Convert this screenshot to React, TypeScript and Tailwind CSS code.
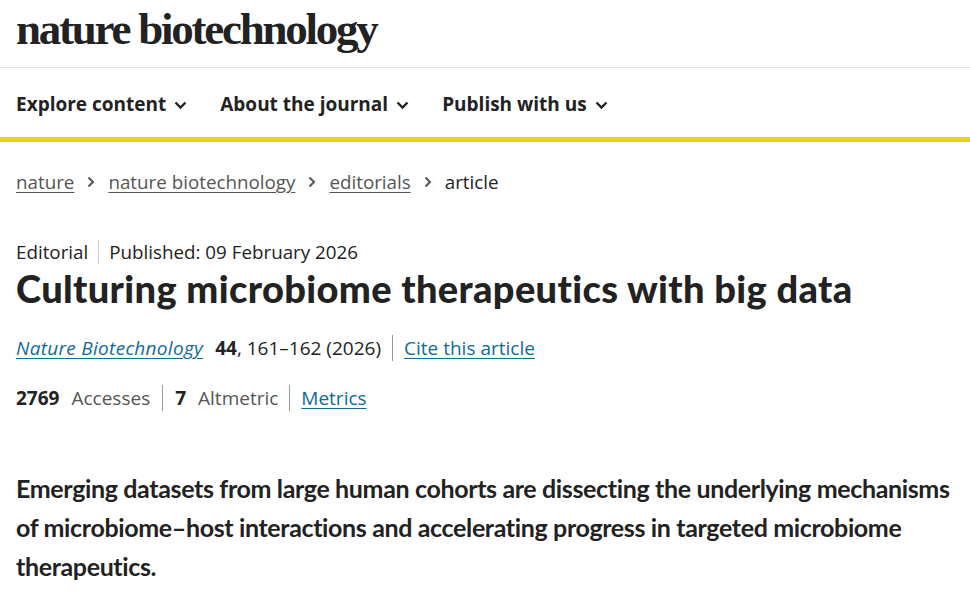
import React from "react";

const Chevron = () => (
  <svg width="13" height="9" viewBox="0 0 13 9" className="ml-[8px] mt-[1px]" fill="none">
    <path d="M1.5 1.5 L6.5 6.5 L11.5 1.5" stroke="#222" strokeWidth="2.4" />
  </svg>
);

const Crumb = () => (
  <svg width="8" height="12" viewBox="0 0 8 12" className="mx-[13px]" fill="none">
    <path d="M1.5 1.5 L6 6 L1.5 10.5" stroke="#555" strokeWidth="2" />
  </svg>
);

const sans = { fontFamily: "'Open Sans', 'Noto Sans', sans-serif" };
const head = { fontFamily: "Lato, 'Open Sans', sans-serif" };

export default function App() {
  return (
    <div className="w-[970px] h-[604px] bg-white overflow-hidden text-[#222]" style={sans}>
      <header className="h-[68px] border-b border-[#e6e6e6] px-[16px] flex items-start">
        <div
          className="mt-[3px] text-[45px] font-bold tracking-[-2.25px] text-[#222] leading-[52px]"
          style={{ fontFamily: "'Liberation Serif', 'DejaVu Serif', serif" }}
        >
          nature biotechnology
        </div>
      </header>
      <nav className="h-[69px] pt-[4px] px-[16px] flex items-center gap-[33px] text-[19px] font-bold text-[#222]">
        <div className="flex items-center">Explore content<Chevron /></div>
        <div className="flex items-center">About the journal<Chevron /></div>
        <div className="flex items-center">Publish with us<Chevron /></div>
      </nav>
      <div className="h-[5px] bg-[#e8d314]" />
      <main className="px-[16px]">
        <div className="mt-[27px] flex items-center text-[18.8px] leading-[26px]">
          <a className="text-[#555] underline underline-offset-[3px] decoration-1">nature</a>
          <Crumb />
          <a className="text-[#555] underline underline-offset-[3px] decoration-1">nature biotechnology</a>
          <Crumb />
          <a className="text-[#555] underline underline-offset-[3px] decoration-1">editorials</a>
          <Crumb />
          <span className="text-[#222]">article</span>
        </div>
        <div className="mt-[44px] flex items-center text-[18.8px] leading-[26px] text-[#222]">
          <span>Editorial</span>
          <span className="mx-[10px] w-px h-[24px] bg-[#ccc]" />
          <span>Published: 09 February 2026</span>
        </div>
        <h1
          className="mt-[1px] text-[38px] leading-[44px] font-black tracking-[0.35px] text-[#222]"
          style={head}
        >
          Culturing microbiome therapeutics with big data
        </h1>
        <div className="mt-[25px] flex items-center text-[19px] leading-[26px]">
          <a className="italic text-[#0f6a9a] underline underline-offset-[3px] decoration-1 tracking-[0.3px]">Nature Biotechnology</a>
          <span className="ml-[12px]"><b>44</b>, 161–162 (2026)</span>
          <span className="mx-[11px] w-px h-[26px] bg-[#999]" />
          <a className="text-[#0f6a9a] underline underline-offset-[3px] decoration-1">Cite this article</a>
        </div>
        <div className="mt-[24px] flex items-center text-[19px] leading-[26px]">
          <b className="text-[#222]">2769</b>
          <span className="ml-[12px] text-[#555]">Accesses</span>
          <span className="mx-[12px] w-px h-[26px] bg-[#999]" />
          <b className="text-[#222]">7</b>
          <span className="ml-[12px] text-[#555]">Altmetric</span>
          <span className="mx-[11px] w-px h-[26px] bg-[#999]" />
          <a className="text-[#0f6a9a] underline underline-offset-[3px] decoration-1">Metrics</a>
        </div>
        <p
          className="mt-[58px] text-[25px] leading-[39px] font-bold tracking-[-0.36px] text-[#222] w-[940px]"
          style={head}
        >
          Emerging datasets from large human cohorts are dissecting the underlying mechanisms of microbiome–host interactions and accelerating progress in targeted microbiome therapeutics.
        </p>
      </main>
    </div>
  );
}
